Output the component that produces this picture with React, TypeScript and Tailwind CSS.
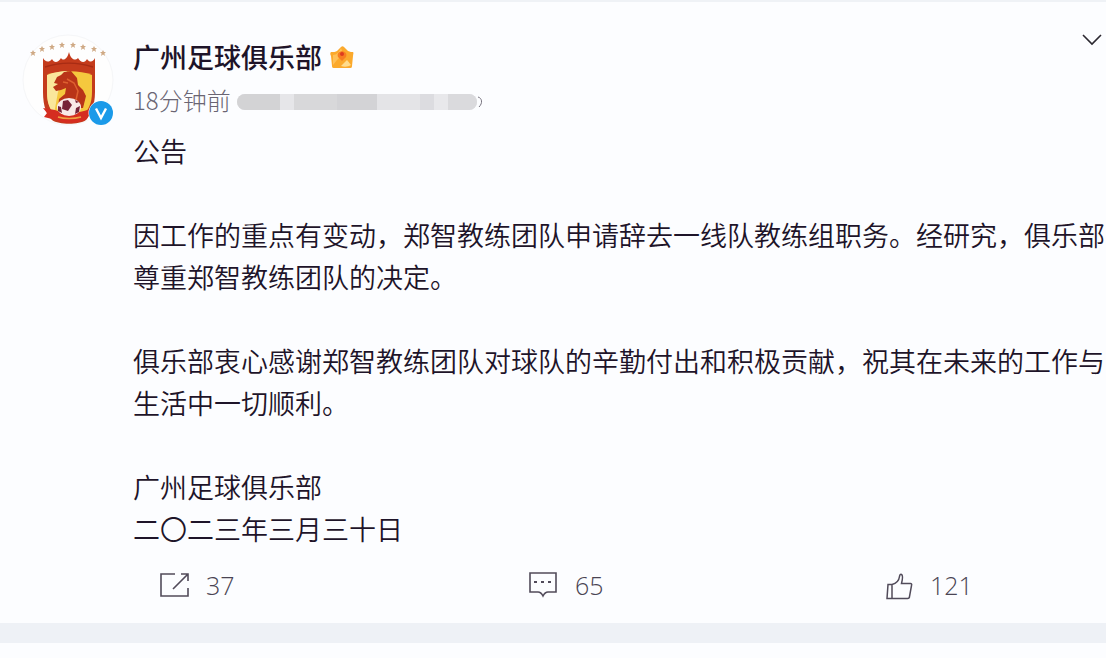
import { FunctionComponent, ReactNode } from "react";

const paragraphs = [
  "公告",
  "",
  "因工作的重点有变动，郑智教练团队申请辞去一线队教练组职务。经研究，俱乐部尊重郑智教练团队的决定。",
  "",
  "俱乐部衷心感谢郑智教练团队对球队的辛勤付出和积极贡献，祝其在未来的工作与生活中一切顺利。",
  "",
  "广州足球俱乐部",
  "二〇二三年三月三十日",
];

const stars = [
  [13, 22],
  [22, 18],
  [32, 16],
  [42, 14],
  [53, 14],
  [63, 16],
  [74, 18],
  [83, 22],
];

const ClubCrest = () => (
  <svg viewBox="0 0 92 92" className="block w-full">
    <circle cx="46" cy="46" r="45" fill="#fefefe" stroke="#f5f6f8" />
    <g transform="translate(1 4)">
      {stars.map(([x, y]) => (
        <path
          key={x}
          transform={`translate(${x - 3} ${y - 7})`}
          d="M0-3 1-1 3-1 1.400.4 2 3 0 1.500-2 3-1.400.400-3-1-1-1Z"
          fill="#cfa984"
        />
      ))}
      <path
        d="M20 20c2 4 6 5 9 1 2 4 6 4 9-1 2 3 6 2 8-6 2 8 6 9 9 6 3 5 7 5 9 1 3 4 6 3 8-1v34c0 15-5 23-9 28-7 5-27 5-34 0-5-5-9-13-9-28Z"
        fill="#c43b1c"
      />
      <path d="M22 29c15-5 33-5 48 0" fill="none" stroke="#a82c14" strokeWidth="1.500" />
      <path
        d="M24 37c13-5 33-5 45 0v17c0 12-4 18-9 24H33c-5-6-9-12-9-24Z"
        fill="#f5c83e"
      />
      <path d="M24 37c8-3 15-4 20-4l-9 21-4 22c-5-6-7-12-7-22Z" fill="#fae79b" />
      <path
        d="M31 45l3-6 4-2 3-3 7-1 6 7 1 7 5 5 3 6-3 12H35l1-9 6-5 1-6-5 2-5 1-3-4 5-3Z"
        fill="#b93418"
      />
      <path d="m44 41 7 4 4 8-2 9M40 44l5 1" fill="none" stroke="#de6030" strokeWidth="1.500" />
      <path d="M20 70l12 2c9 4 22 4 35-1l-3 10c-9 5-25 5-31 1l-12-3 3-4Z" fill="#d52d20" />
      <ellipse cx="46" cy="69" rx="12" ry="9" fill="#f8e9e8" />
      <path d="m40 63 5-1 4 5-4 6-6-2ZM35 68l3 1 1 6-4-2Zm18 2 4-2-1 6-4 2Zm-1-8 4 2-3 1Z" fill="#762338" />
      <path d="M35 79c6 2 16 2 23 0" fill="none" stroke="#efa342" strokeWidth="1.500" />
    </g>
  </svg>
);

const VerifiedBadge = () => (
  <svg viewBox="0 0 26 26" className="absolute right-0 bottom-0 w-[26px]">
    <circle cx="13" cy="13" r="12.500" fill="#fff" />
    <circle cx="13" cy="13" r="12" fill="#1b9ae9" />
    <path d="M8 8.500 13 18l5-9.500" fill="none" stroke="#fff" strokeWidth="2.400" />
  </svg>
);

const MemberIcon = () => (
  <svg viewBox="0 0 28 28" className="w-7">
    <path
      d="M3 9c2 0 5 0 6-1l4-4c1-1 2-1 3 0l4 4c2 1 4 1 5 1 1 1 0 2 0 4l-1 10c0 2-1 2-3 2H7c-2 0-3 0-3-2L3 13c-1-2-1-3 0-4Z"
      fill="#fba92c"
    />
    <path d="M5 12c4 0 6-3 8-7l2 6-6 6-4 5Z" fill="#ffc057" />
    <path d="m19 17 4 5c-3 2-7 2-10 1Z" fill="#ffdc8c" />
    <path d="M14 8c4 1 5 3 4 6l-4 4-4-4c-1-3 0-5 4-6Z" fill="#f77d22" />
    <circle cx="14" cy="11" r="2" fill="#dd3c20" />
  </svg>
);

const RepostIcon = () => (
  <svg viewBox="0 0 30 28" className="w-[30px]" fill="none" stroke="#514b5a" strokeWidth="1.600">
    <path d="M15 2H1v22h27v-8M28 9V2h-7M28 2 13 17" />
  </svg>
);

const CommentIcon = () => (
  <svg viewBox="0 0 30 28" className="w-[30px]" fill="none" stroke="#514b5a" strokeWidth="1.600">
    <path d="M1 1h26v19h-8c-3 0-4 2-5 4-1-2-3-4-5-4H1Z" />
    <path d="M5 10h3M12 10h3M19 10h3" strokeWidth="2" />
  </svg>
);

const LikeIcon = () => (
  <svg viewBox="0 0 28 28" className="w-7" fill="none" stroke="#514b5a" strokeWidth="1.500">
    <path d="M2 12.500h4v14H1ZM6 12.500c4-1 7-4 7.500-8 .500-2 1-2.500 2-2 2 1 1 5 0 9h9c1 0 1.500 1 1 2l-2 11c0 1-1 2-2 2H6" />
  </svg>
);

const actions: { icon: ReactNode; label: string; count: number }[] = [
  { icon: <RepostIcon />, label: "转发", count: 37 },
  { icon: <CommentIcon />, label: "评论", count: 65 },
  { icon: <LikeIcon />, label: "赞", count: 121 },
];

// Pixelated strip that hides the source of the post
const HiddenSource = () => (
  <div className="flex items-center pt-1">
    <div className="flex h-4 w-60 overflow-hidden rounded-full bg-[#e4e4e7]">
      <span className="w-[43px] bg-[#d3d3d5]" />
      <span className="w-[14px] bg-[#e6e6e9]" />
      <span className="w-[43px] bg-[#d8d8da]" />
      <span className="w-10 bg-[#d3d3d6]" />
      <span className="w-[43px] bg-[#e4e4e7]" />
      <span className="w-[14px] bg-[#dcdce0]" />
      <span className="w-[14px] bg-[#e8e8eb]" />
      <span className="flex-1 bg-[#dadadd]" />
    </div>
    <svg viewBox="0 0 6 14" className="w-1.5" fill="none" stroke="#77737f">
      <path d="M1 2c4 1 5 6 1 10" />
    </svg>
  </div>
);

const Post: FunctionComponent = () => {
  return (
    <article className="border-t-2 border-t-[#eff2f6] bg-[#fcfdff] pb-[17px]">
      <div className="flex gap-[19px] pl-[22px]">
        <div className="relative mt-8 h-[92px] w-[92px] shrink-0">
          <ClubCrest />
          <VerifiedBadge />
        </div>

        <div className="min-w-0 flex-1">
          <header className="flex items-start justify-between">
            <div className="pt-[35px]">
              <div className="flex h-10 items-center gap-1.5">
                <h1 className="text-[27px] font-medium">广州足球俱乐部</h1>
                <MemberIcon />
              </div>
              <div className="flex h-[45px] items-center gap-1.5">
                <time className="text-[24px] font-light text-[#6a6573]">
                  18分钟前
                </time>
                <HiddenSource />
              </div>
            </div>

            <button aria-label="更多" className="pt-8 pr-1">
              <svg viewBox="0 0 20 12" className="w-5" fill="none" stroke="#2b2830" strokeWidth="1.600">
                <path d="m1 1 9 9 9-9" />
              </svg>
            </button>
          </header>

          <div className="mt-2 text-[27px] leading-[42px] font-[350]">
            {paragraphs.map((text, index) => (
              <p key={index} className="min-h-[42px]">
                {text}
              </p>
            ))}
          </div>
        </div>
      </div>

      <footer className="mt-4 grid grid-cols-[369fr_357fr_220fr] pl-40">
        {actions.map(({ icon, label, count }) => (
          <button
            key={label}
            aria-label={label}
            className="flex h-10 items-center gap-4 justify-self-start font-['Open_Sans',sans-serif] text-[25px] font-light text-[#4a4453]"
          >
            {icon}
            <span>{count}</span>
          </button>
        ))}
      </footer>
    </article>
  );
};

const App = () => {
  return (
    <main className="min-h-screen bg-[#fcfdff] font-['Noto_Sans_CJK_SC',sans-serif] text-[#1e1429]">
      <Post />
      <div className="h-5 bg-[#eef1f6]" />
    </main>
  );
};

export default App;
